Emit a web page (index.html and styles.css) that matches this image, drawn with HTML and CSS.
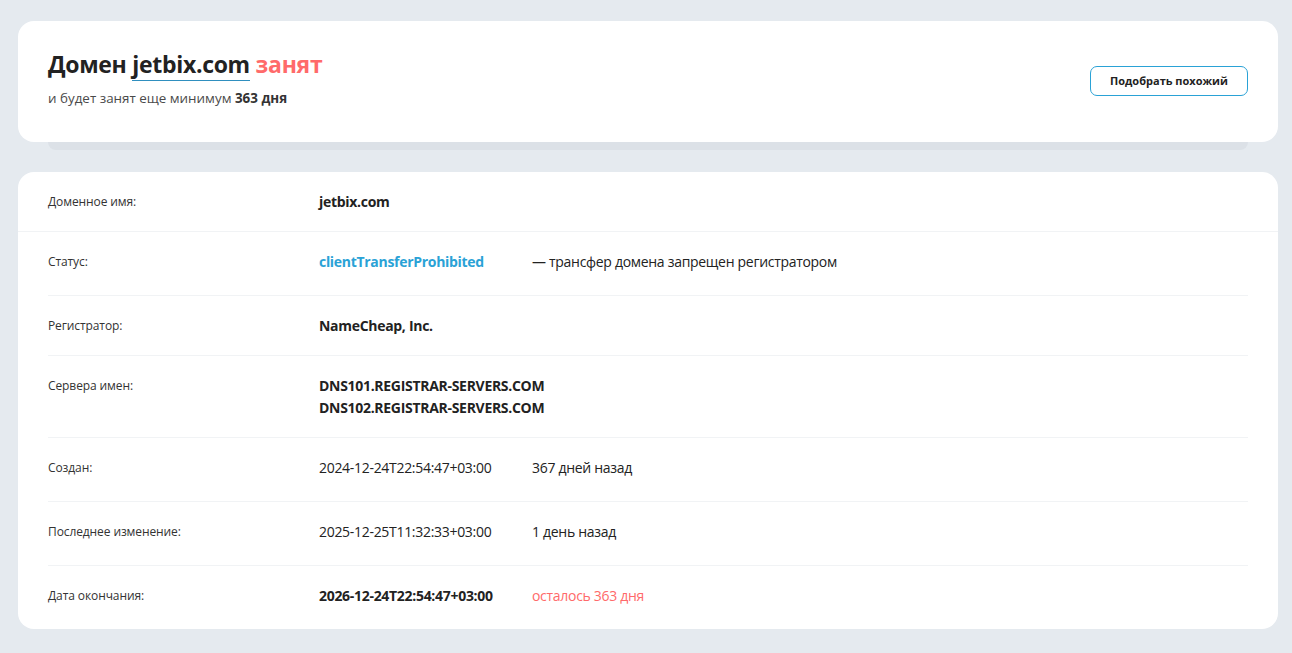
FILE: index.html
```html
<!DOCTYPE html>
<html lang="ru">
<head>
	<meta charset="utf-8">
	<title>jetbix.com — Whois</title>
	<link rel="stylesheet" href="styles.css">
</head>
<body>
	<section class="head-card">
		<div class="head-text">
			<h1>Домен <a class="domain-link" href="#">jetbix.com</a> <span class="busy">занят</span></h1>
			<p class="sub">и будет занят еще минимум <b>363 дня</b></p>
		</div>
		<button class="similar-btn">Подобрать похожий</button>
	</section>
	<div class="head-stack"></div>

	<section class="info-card">
		<div class="row">
			<span class="label">Доменное имя:</span>
			<span class="value bold">jetbix.com</span>
		</div>
		<div class="row">
			<span class="label">Статус:</span>
			<span class="value bold status">clientTransferProhibited</span>
			<span class="note">— трансфер домена запрещен регистратором</span>
		</div>
		<div class="row">
			<span class="label">Регистратор:</span>
			<span class="value bold">NameCheap, Inc.</span>
		</div>
		<div class="row">
			<span class="label">Сервера имен:</span>
			<span class="value bold wide">DNS101.REGISTRAR-SERVERS.COM<br>DNS102.REGISTRAR-SERVERS.COM</span>
		</div>
		<div class="row">
			<span class="label">Создан:</span>
			<span class="value">2024-12-24T22:54:47+03:00</span>
			<span class="note">367 дней назад</span>
		</div>
		<div class="row">
			<span class="label">Последнее изменение:</span>
			<span class="value">2025-12-25T11:32:33+03:00</span>
			<span class="note">1 день назад</span>
		</div>
		<div class="row">
			<span class="label">Дата окончания:</span>
			<span class="value bold">2026-12-24T22:54:47+03:00</span>
			<span class="note expires">осталось 363 дня</span>
		</div>
	</section>
</body>
</html>
```

FILE: styles.css
```css
:root {
	--bg: #e5eaef;
	--stack: #dce1e7;
	--txt: #222;
	--red: #ff6a6a;
	--blue: #2aa2d6;
	--line: #f1f3f5;
}
body {
	margin: 0;
	padding: 21px 14px 24px 18px;
	background-color: var(--bg);
	color: var(--txt);
	font-family: 'Open Sans', 'Noto Sans', sans-serif;
}
.head-card {
	display: flex;
	align-items: center;
	justify-content: space-between;
	background: white;
	border-radius: 16px;
	padding: 27px 30px 34px;
}
h1 {
	margin: 0;
	font-size: 23px;
	line-height: 32px;
	font-weight: 700;
	letter-spacing: -0.3px;
}
.domain-link {
	color: inherit;
	text-decoration: none;
	border-bottom: 1px solid #2f8fbf;
}
.busy {
	color: var(--red);
}
.sub {
	margin: 8px 0 0;
	font-size: 13.4px;
	line-height: 20px;
	color: #4a4a4a;
}
.sub b {
	color: #333;
}
.similar-btn {
	width: 158px;
	height: 30px;
	background: white;
	border: 1px solid var(--blue);
	border-radius: 7px;
	font-family: inherit;
	font-size: 11px;
	font-weight: 700;
	color: var(--txt);
	cursor: pointer;
	margin-bottom: -5px;
}
.head-stack {
	height: 8px;
	margin: 0 30px;
	background: var(--stack);
	border-radius: 0 0 10px 10px;
}
.info-card {
	margin-top: 22px;
	background: white;
	border-radius: 16px;
}
.row {
	display: grid;
	grid-template-columns: 271px 213px 1fr;
	align-items: start;
	margin: 0 30px;
	padding: 19px 0 18px;
	border-bottom: 1px solid var(--line);
	line-height: 22px;
}
.row:first-child {
	margin: 0;
	padding: 19px 30px 18px;
}
.row:last-child {
	border-bottom: none;
	padding-bottom: 18px;
}
.label {
	font-size: 12px;
	color: #333;
	letter-spacing: -0.1px;
}
.value {
	font-size: 14px;
	letter-spacing: -0.3px;
}
.value.wide {
	grid-column: 2 / 4;
}
.bold {
	font-weight: 700;
}
.status {
	color: var(--blue);
}
.note {
	font-size: 14px;
	padding-bottom: 4px;
	letter-spacing: -0.3px;
}
.expires {
	color: var(--red);
}
```
